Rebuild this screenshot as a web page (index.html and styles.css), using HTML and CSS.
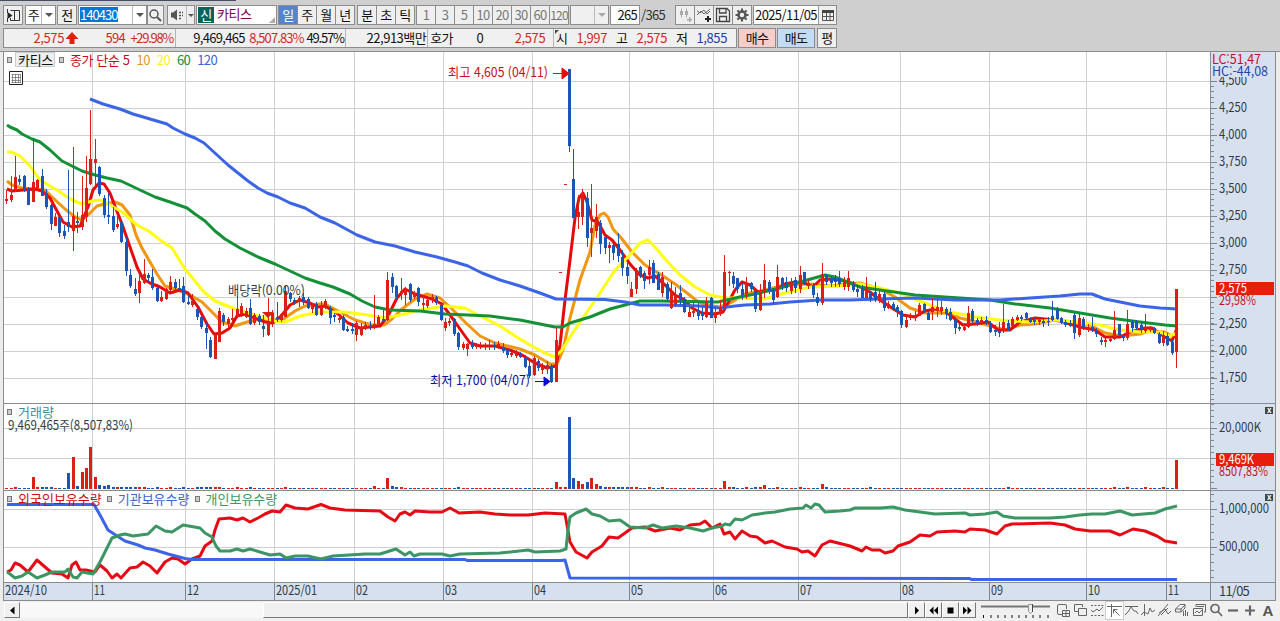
FILE: index.html
```html
<!DOCTYPE html>
<html lang="ko">
<head>
    <meta charset="UTF-8">
    <title>카티스 일봉 차트</title>
    <link rel="stylesheet" href="styles.css">
</head>
<body>
    <div class="topline"></div>

    <div class="toolbar">
        <div class="group"><button class="btn w18"><svg width="15" height="15" viewBox="0 0 15 15"><path d="M4.500 2.500H13.500V12.500H4.500M8.500 2V12M1.500 1V5M1.500 10V14M4.500 12.500V10" fill="none" stroke="#333"/><path d="M1.500 4L6.500 7.500L1.500 11Z" fill="#222"/></svg></button></div>
        <div class="group select gap2"><span class="cell w15">주</span><span class="drop"></span></div>
        <div class="group gap1"><button class="btn w18">전</button></div>
        <div class="group select gap1"><span class="cell code"><b>140430</b></span><span class="drop"></span></div>
        <div class="group"><button class="btn w15"><svg width="15" height="15" viewBox="0 0 15 15"><circle cx="6" cy="6" r="4" fill="none" stroke="#555" stroke-width="1.500"/><path d="M9 9L13 13" stroke="#555" stroke-width="2"/></svg></button></div>
        <div class="group gap3"><button class="btn w18"><svg width="16" height="14" viewBox="0 0 16 14"><path d="M2 4.500H4L8 1.500V12.500L4 9.500H2Z" fill="#555"/><path d="M10 4.500h2M10 7.500h2M10 10.500h2M13 4.500h1M13 7.500h1" stroke="#555" stroke-width="1.500"/></svg></button><span class="drop raised"></span></div>
        <div class="group select name gap1"><span class="tag">신</span><span class="stock">카티스</span><i class="corner"></i></div>
        <div class="group gap1"><button class="btn w18 active">일</button><button class="btn w18">주</button><button class="btn w18">월</button><button class="btn w18">년</button></div>
        <div class="group gap2"><button class="btn w18">분</button><button class="btn w18">초</button><button class="btn w18">틱</button></div>
        <div class="group gap1 minutes"><button class="btn w18">1</button><button class="btn w18">3</button><button class="btn w18">5</button><button class="btn w18">10</button><button class="btn w18">20</button><button class="btn w18">30</button><button class="btn w18">60</button><button class="btn w18 tight">120</button></div>
        <div class="group gap1 disabled"><span class="cell w23"></span><span class="drop"></span></div>
        <div class="group select count gap1">265</div>
        <span class="total">/365</span>
        <div class="group tools">
            <button class="btn w18"><svg width="17" height="17" viewBox="0 0 17 17"><path d="M4.500 1.500v9M9.500 1.500v9" stroke="#aaa"/><path d="M3 4h3v4H3zM8 4h3v4H8zM10 12h5v1.500h-5zM12 10h1.500v5h-1.500z" fill="#aaa"/></svg></button>
            <button class="btn w18"><svg width="17" height="17" viewBox="0 0 17 17"><path d="M1 8L5 4L8 7L14 2M1 4L4 6L8 3L11 7L14 4" fill="none" stroke="#666"/><path d="M9 12h6M12 9v6" stroke="#222" stroke-width="2"/></svg></button>
            <button class="btn w18"><svg width="16" height="16" viewBox="0 0 16 16"><path d="M1.500 1.500H12L14.500 4V14.500H1.500ZM4.500 1.500V6H11V1.500M4.500 14V9.500H11.500V14" fill="none" stroke="#444" stroke-width="1.300"/></svg></button>
            <button class="btn w18"><svg width="16" height="16" viewBox="0 0 16 16"><circle cx="8" cy="8" r="3.500" fill="none" stroke="#555" stroke-width="2.500"/><path d="M8 1.500V4M8 12V14.500M1.500 8H4M12 8H14.500M3.400 3.400L5 5M11 11L12.600 12.600M12.600 3.400L11 5M5 11L3.400 12.600" stroke="#555" stroke-width="2"/></svg></button>
        </div>
        <div class="group select date gap1"><span class="cell">2025/11/05</span><button class="btn w18"><svg width="14" height="13" viewBox="0 0 14 13"><path d="M1.500 1.500H12.500V11.500H1.500ZM5.500 3V11M9 3V11M1 7.500H12" fill="none" stroke="#555"/><path d="M1 1H13V4H1Z" fill="#444"/></svg></button></div>
    </div>

    <div class="quotebar">
        <div class="quotes">
            <div class="quote q1 up"><span>2,575</span><svg width="14" height="14" viewBox="0 0 14 14"><path d="M7 1L13.500 8H9.500V13H4.500V8H0.500Z" fill="#e2200e"/></svg><span>594</span><span>+29.98%</span></div>
            <div class="quote q2"><span>9,469,465</span><span class="up">8,507.83%</span><span>49.57%</span></div>
            <div class="quote q3"><span>22,913백만</span></div>
            <div class="quote q4"><em>호가</em><span>0</span><span class="up">2,575</span></div>
            <div class="quote q5"><i class="notch"></i><em>시</em><span class="up">1,997</span><em>고</em><span class="up">2,575</span><em>저</em><span class="down">1,855</span></div>
        </div>
        <button class="order buy">매수</button>
        <button class="order sell">매도</button>
        <button class="order avg">평</button>
    </div>

    <div class="chart">
        <div class="panel price">
            <svg id="price" width="1207" height="351" viewBox="4 52 1207 351"></svg>
            <div class="legend"><i></i><span class="chip">카티스</span><i></i><span class="ma5">종가 단순 5</span><span class="ma10">10</span><span class="ma20">20</span><span class="ma60">60</span><span class="ma120">120</span></div>
            <svg class="gridicon" width="14" height="14" viewBox="0 0 14 14"><path d="M.5.5h13v13H.5z" fill="#fff" stroke="#222"/><path d="M2.500 3.500h9M2.500 6.500h9M2.500 9.500h9M2.500 11.500h9M3.500 3v9M6.500 3v9M9.500 3v9M11.500 3v9" stroke="#666" stroke-width=".7"/></svg>
        </div>
        <div class="axis"><svg id="priceAxis" width="65" height="351" viewBox="1211 52 65 351"></svg></div>

        <div class="panel">
            <svg id="volume" width="1207" height="86" viewBox="4 404 1207 86"></svg>
            <div class="legend"><i></i><span class="vol">거래량</span></div>
        </div>
        <div class="axis"><svg id="volumeAxis" width="65" height="86" viewBox="1211 404 65 86"></svg><b class="close">x</b></div>

        <div class="panel">
            <svg id="holding" width="1207" height="91" viewBox="4 491 1207 91"></svg>
            <div class="legend"><i></i><span class="foreign">외국인보유수량</span><i></i><span class="inst">기관보유수량</span><i></i><span class="retail">개인보유수량</span></div>
        </div>
        <div class="axis"><svg id="holdingAxis" width="65" height="91" viewBox="1211 491 65 91"></svg><b class="close">x</b></div>

        <div class="dates"><svg id="dates" width="1207" height="17" viewBox="4 583 1207 17"></svg></div>
        <div class="axis last">11/05</div>
    </div>

    <div class="bottombar">
        <button class="scroll"><svg width="9" height="9" viewBox="0 0 9 9"><path d="M6.500 0.500V8.500L2 4.500Z"/></svg></button>
        <div class="track"><div class="thumb"></div></div>
        <button class="scroll"><svg width="9" height="9" viewBox="0 0 9 9"><path d="M3 0.500V8.500L7 4.500Z"/></svg></button>
        <button class="scroll"><svg width="9" height="9" viewBox="0 0 9 9"><path d="M4.500 .5V8.500L.5 4.500ZM9 .5V8.500L5 4.500Z"/></svg></button>
        <button class="scroll"><svg width="9" height="9" viewBox="0 0 9 9"><path d="M1.500 1.500h6v6h-6z"/></svg></button>
        <button class="scroll"><svg width="9" height="9" viewBox="0 0 9 9"><path d="M0 .5V8.500L4 4.500ZM4.500 .5V8.500L8.500 4.500Z"/></svg></button>
        <svg class="zoomer" width="71" height="17" viewBox="0 0 71 17"><path d="M1 4.500H70" stroke="#777" stroke-width="2"/><path d="M3.500 13v3M11 13v3M18 13v3M25 13v3M32 13v3M39 13v3M46 13v3M53 13v3M60 13v3M68 13v3" stroke="#111"/><path d="M49 2.500h3.500v7l-2 2-2-2v-7z" fill="#eee" stroke="#999"/><path d="M52.500 2v8" stroke="#444"/></svg>
        <div class="icons">
            <svg viewBox="0 0 17 17"><path d="M7 12.500H4q-1.500 0-1.500-1.500V4Q2.500 2.500 4 2.500H10q1.500 0 1.500 1.500V7M7.500 8.500h7v6h-7zM11 8v6M7.500 11.500h7"/></svg>
            <svg viewBox="0 0 17 17"><path d="M6 9.500H2.500V2.500H10.500V5M6.500 6.500h8v7h-8z"/></svg>
            <svg viewBox="0 0 17 17"><path d="M2 8l2 2 4-3 2 2 4-4"/><path d="M2 3.500H15M2 13.500H15" stroke-dasharray="2 1.500"/></svg>
            <svg class="pressed" viewBox="0 0 17 17"><path d="M5.500 2V15M1 4.500H16M7.500 7.500l6 6M7.500 7.500v4M7.500 7.500h4"/></svg>
            <svg viewBox="0 0 17 17"><path d="M2 4.500H15M2 13L5 10L8 5L11 9H13L15 12"/></svg>
            <svg viewBox="0 0 17 17"><path d="M4.500 2V14M1 13L4 10L8 12L10 6L12 10L15 8"/></svg>
            <svg viewBox="0 0 17 17"><path d="M1 14L11 2M2 11L8 7L11 12L14 9M4 13L11 6"/></svg>
            <svg viewBox="0 0 17 17"><path d="M1.500 7L6 2.500H11V6L7 10H1.500ZM2 7H7V10M7 7L11 3M9.500 9v5M11.500 8v6M13.500 10v4"/></svg>
            <svg viewBox="0 0 17 17"><path d="M5 5V2.500H14.500V10H13M2.500 6.500h9v7h-9zM4 11l2-2 2 2 3-3M6 4.500h7"/></svg>
            <svg class="bold" viewBox="0 0 17 17"><circle cx="7" cy="6.500" r="4"/><path d="M10 9.500L14 14"/></svg>
            <svg class="heavy" viewBox="0 0 17 17"><path d="M3 8.500H13"/></svg>
            <svg class="heavy" viewBox="0 0 17 17"><path d="M3 8.500H13M8 3.500V13.500"/></svg>
            <b>A</b>
        </div>
    </div>

    <script src="chart.js"></script>
</body>
</html>
```
FILE: styles.css
```css
* {
    box-sizing: border-box;
}

body {
    margin: 0;
    width: 1280px;
    height: 621px;
    overflow: hidden;
    background: #cfcfcf;
    font-family: "Noto Sans CJK KR", "Liberation Sans", sans-serif;
    font-size: 13px;
    letter-spacing: -0.7px;
    line-height: 18px;
    color: #111;
}

button {
    font: inherit;
    letter-spacing: inherit;
    color: inherit;
    padding: 0;
    margin: 0;
}

svg {
    display: block;
    flex: none;
}

.topline {
    width: 236px;
    height: 1px;
    background: #474b63;
}

/* first toolbar row */
.toolbar {
    display: flex;
    margin: 4px 0 0 3px;
    height: 20px;
}

.group {
    display: flex;
    flex: none;
    height: 20px;
    border: 1px solid #8c8c8c;
    background: #f0f0f0;
}

.group.select {
    background: #fff;
}

.gap1 { margin-left: 1px; }
.gap2 { margin-left: 2px; }
.gap3 { margin-left: 3px; }

.btn {
    display: flex;
    align-items: center;
    justify-content: center;
    height: 18px;
    border: 0;
    background: #efefef;
    white-space: nowrap;
}

.btn + .btn {
    border-left: 1px solid #8c8c8c;
    width: 19px;
}

.btn.active {
    background: #5485cc;
    color: #fff;
}

.w15 { width: 15px; }
.w18 { width: 18px; }
.w23 { width: 23px; }

.cell {
    text-align: center;
}

.code {
    width: 53px;
    text-align: left;
    padding: 1px 0 0 1px;
}

.code b {
    display: block;
    width: 38px;
    height: 15px;
    line-height: 15px;
    font-weight: normal;
    letter-spacing: -0.95px;
    background: #0078d7;
    color: #fff;
}

.drop {
    display: flex;
    align-items: center;
    justify-content: center;
    width: 14px;
    border-left: 1px solid #bbb;
}

.drop::after {
    content: "";
    border: 4px solid transparent;
    border-top-color: #555;
    border-bottom: 0;
}

.drop.raised {
    width: 8px;
    background: #efefef;
}

.drop.raised::after {
    border-width: 3px 3px 0;
}

.name {
    width: 81px;
    position: relative;
    padding: 1px;
}

.tag {
    width: 16px;
    height: 16px;
    line-height: 15px;
    background: #06645c;
    color: #fff;
    text-align: center;
}

.stock {
    margin-left: 3px;
    line-height: 14px;
    letter-spacing: -0.4px;
    color: #80004e;
}

.corner {
    position: absolute;
    right: 1px;
    bottom: 1px;
    border: 3.5px solid transparent;
    border-right-color: #aaa;
    border-bottom-color: #aaa;
}

.minutes {
    color: #777;
}

.tight {
    font-size: 12px;
    letter-spacing: -0.9px;
}

.disabled .drop::after {
    border-top-color: #aaa;
}

.count {
    width: 30px;
    justify-content: flex-end;
    padding-right: 2px;
}

.total {
    width: 35px;
    padding: 1px 0 0 1px;
    color: #333;
    letter-spacing: -0.7px;
}

.date .cell {
    width: 64px;
    letter-spacing: -0.6px;
}

.date .btn {
    border-left: 1px solid #999;
}

/* second row with quotes */
.quotebar {
    display: flex;
    margin: 3px 0 0 3px;
    height: 20px;
}

.quotes {
    display: flex;
    width: 734px;
    border: 1px solid #8c8c8c;
    background: #f0f0f0;
}

.quote {
    display: flex;
    align-items: center;
    border-right: 1px solid #b5b5b5;
    white-space: nowrap;
}

.quote span {
    text-align: right;
    flex: none;
}

.quote em {
    font-style: normal;
    flex: none;
}

.up { color: #d2281e; }
.down { color: #2040a8; }

.q1 { width: 172px; }
.q1 span:first-child { width: 60px; letter-spacing: -0.4px; }
.q1 svg { margin-left: 1px; }
.q1 span:nth-of-type(2) { width: 46px; }
.q1 span:last-child { width: 48px; letter-spacing: -1.3px; }
.q2 { width: 171px; }
.q2 span:first-child { width: 69px; }
.q2 span:nth-child(2) { width: 59px; letter-spacing: -0.9px; }
.q2 span:last-child { width: 40px; letter-spacing: -1.2px; }
.q3 { width: 82px; justify-content: flex-end; padding-right: 1px; }
.q3 span { letter-spacing: -0.5px; }
.q4 { width: 126px; padding-left: 2px; }
.q4 em { width: 24px; }
.q4 span { width: 29px; letter-spacing: -0.4px; }
.q4 span:last-child { width: 62px; }
.q5 { position: relative; border: 0; padding-left: 2px; }
.q5 em { width: 12px; }
.q5 span { width: 39px; margin-right: 9px; letter-spacing: -0.4px; }

.notch {
    position: absolute;
    left: 1px;
    top: 1px;
    border: 2.5px solid #444;
    border-right-color: transparent;
    border-bottom-color: transparent;
}

.order {
    width: 38px;
    margin-left: 1px;
    border: 1px solid #8c8c8c;
    background: #efefef;
}

.buy { background: #f6cdc9; }
.sell { background: #c3dcf6; }
.order.avg { width: 20px; margin-left: 2px; }

/* chart area */
.chart {
    display: grid;
    grid-template-columns: 1207px 66px;
    grid-template-rows: 352px 87px 92px 18px;
    margin-top: 3px;
    width: 1280px;
    padding-left: 3px;
    border-top: 1px solid #8c8c8c;
    background: #ececec;
}

.panel,
.dates {
    position: relative;
    width: 1208px;
    background: #fff;
    border-left: 1px solid #8c8c8c;
    border-bottom: 1px solid #8c8c8c;
}

.axis {
    position: relative;
    margin-left: 1px;
    background: #d6e0ef;
    border-right: 1px solid #8c8c8c;
    border-bottom: 1px solid #8c8c8c;
}

.dates {
    background: #d6e0ef;
}

.last {
    padding-left: 8px;
    line-height: 15px;
    color: #333c46;
    letter-spacing: -0.8px;
}

.legend {
    position: absolute;
    left: 3px;
    top: -1px;
    display: flex;
    align-items: center;
    height: 17px;
    white-space: nowrap;
    letter-spacing: 0;
}

.legend i {
    width: 5px;
    height: 6px;
    border: 1px solid #777;
    background: #ccc;
}

.legend span {
    margin: 0 5px 0 6px;
}

.price .legend span {
    margin: 0 0 0 7px;
    letter-spacing: -0.6px;
}

.price .legend .chip {
    height: 15px;
    line-height: 13px;
    margin: 0 4px 0 3px;
    padding: 0 1px 0 2px;
    letter-spacing: -0.3px;
    background: #eee;
    border: 1px solid #ccc;
}

.price .legend .ma5 { margin-left: 6px; letter-spacing: -0.4px; }
.ma5 { color: #c80a14; }
.ma10 { color: #e69628; }
.ma20 { color: #fff01e; }
.ma60 { color: #148c3c; }
.ma120 { color: #3c64d2; }
.vol { color: #3c8c96; }
.foreign { color: #c80a14; }
.inst { color: #3c64d2; }
.retail { color: #3c9664; }

.gridicon {
    position: absolute;
    left: 5px;
    top: 19px;
}

.close {
    position: absolute;
    right: 2px;
    top: 3px;
    width: 8px;
    height: 7px;
    background: #3c4650;
    color: #fff;
    font-size: 8px;
    line-height: 6px;
    text-align: center;
}

svg text {
    font-size: 13px;
    letter-spacing: 0;
    fill: #333c46;
}

.grid {
    stroke: #d0d0d0;
    shape-rendering: crispEdges;
}

.line {
    fill: none;
    stroke-width: 3;
    stroke-linejoin: round;
}

.tick {
    stroke: #7d858e;
    shape-rendering: crispEdges;
}

/* scroll bar and drawing tools */
.bottombar {
    display: flex;
    height: 20px;
    padding: 1px 0 2px 4px;
    background: #f0f0f0;
}

.scroll {
    display: flex;
    align-items: center;
    justify-content: center;
    flex: none;
    width: 17px;
    height: 16px;
    background: #f0f0f0;
    border: 1px solid #fff;
    border-right-color: #777;
    border-bottom-color: #777;
}

.scroll:first-child {
    width: 16px;
}

.track {
    display: flex;
    justify-content: flex-end;
    flex: none;
    width: 888px;
    height: 16px;
    background: #f8f8f8;
}

.thumb {
    width: 645px;
    background: #f0f0f0;
    border: 1px solid #fff;
    border-right-color: #777;
    border-bottom-color: #777;
}

.zoomer {
    margin-left: 4px;
}

.icons {
    display: flex;
    margin-left: 4px;
    color: #555;
}

.icons svg {
    width: 17px;
    height: 17px;
    fill: none;
    stroke: #666;
}

.icons .pressed {
    background: #fff;
    outline: 1px solid #ccc;
}

.icons .bold { stroke-width: 1.7; }
.icons .heavy { stroke-width: 2.2; }

.icons b {
    width: 17px;
    font: bold 15px/17px "Liberation Sans", sans-serif;
    text-align: center;
}
```
FILE: chart.js
```js
const NS = 'http://www.w3.org/2000/svg';
const RED = '#dc1e14';
const BLUE = '#1a56b8';

function draw(parent, tag, attrs, text) {
    const el = document.createElementNS(NS, tag);
    for (const key in attrs) el.setAttribute(key, attrs[key]);
    if (text) el.textContent = text;
    parent.appendChild(el);
    return el;
}

function label(parent, x, y, text, width, color) {
    const attrs = { x: x, y: y, textLength: width, lengthAdjust: 'spacingAndGlyphs' };
    if (color) attrs.style = 'fill:' + color;
    draw(parent, 'text', attrs, text);
}

function line(parent, color, points) {
    draw(parent, 'polyline', { class: 'line', stroke: color, points: points });
}

const price = document.getElementById('price');
const volume = document.getElementById('volume');
const holding = document.getElementById('holding');
const dates = document.getElementById('dates');
const priceAxis = document.getElementById('priceAxis');
const volumeAxis = document.getElementById('volumeAxis');
const holdingAxis = document.getElementById('holdingAxis');

// high, body top, body bottom, low; r = up day, b = down day
const candles = `190 199 201 204 r|176 195 200 202 r|156 177 190 192 r|175 179 182 185 b|175 176 191 192 b|187 190 205 205 b|138 182 202 202 r|179 180 188 189 r|169 176 196 196 b|189 193 207 209 b
204 205 224 230 b|213 217 226 226 r|216 217 233 237 b|225 231 236 239 b|170 222 227 232 b|147 216 231 251 r|212 221 223 233 b|176 215 227 230 r|156 188 217 222 r|110 159 184 185 r
139 159 163 185 r|166 167 194 196 b|195 198 215 218 b|193 215 217 224 b|207 216 230 232 b|215 224 227 229 r|221 222 242 243 b|237 242 271 276 b|269 275 286 288 b|278 289 294 296 b
273 281 293 303 r|259 274 283 284 r|273 275 278 282 b|269 277 288 290 b|284 288 301 302 b|291 297 301 302 r|288 289 299 300 r|276 282 290 292 r|279 282 288 292 b|279 288 289 290 b
277 286 302 303 b|295 302 304 305 b|294 301 305 307 r|305 309 317 320 b|312 317 327 329 b|323 328 333 349 b|337 340 357 358 b|334 335 359 359 r|308 311 342 342 r|313 315 322 326 b
317 319 324 327 r|309 318 320 323 r|296 309 316 318 r|303 306 315 317 r|308 311 317 318 r|299 308 324 325 b|313 315 323 325 r|314 316 322 325 b|315 326 329 337 b|298 322 335 336 r
310 313 323 327 r|302 317 319 322 b|313 314 320 322 r|285 291 317 317 r|292 293 299 302 b|298 300 302 305 b|296 298 301 307 r|293 297 302 305 b|297 299 308 309 b|303 305 309 313 r
302 304 315 316 b|301 307 315 316 r|299 301 308 309 r|306 308 318 324 b|313 315 317 322 b|316 318 320 323 r|315 317 330 331 b|326 329 331 332 b|323 329 331 334 b|321 323 335 341 r
323 327 335 336 r|322 325 328 330 r|321 326 328 330 b|295 324 328 329 r|315 317 325 326 r|310 319 321 324 b|272 280 320 321 r|273 277 287 293 b|285 286 297 299 b|278 291 294 300 r
287 289 295 305 r|283 284 300 302 b|291 293 297 299 r|287 288 302 306 b|295 303 305 310 r|297 300 306 308 r|294 297 300 303 r|296 297 303 305 b|302 305 320 321 b|318 322 328 331 r
318 321 323 326 r|318 319 334 336 b|332 333 347 350 b|342 344 348 350 r|343 344 349 356 r|340 343 347 349 b|343 345 347 349 r|342 345 346 349 r|343 345 347 350 r|340 345 346 350 r
342 345 347 350 b|341 344 347 349 r|343 347 351 353 b|348 350 355 358 b|352 353 355 357 r|350 352 356 358 r|352 353 357 358 b|355 357 367 368 b|359 366 376 378 b|356 358 375 376 r
359 361 368 371 b|363 366 370 374 r|361 365 369 374 r|364 366 382 383 b|328 340 382 382 r|272 272 273 273 r|184 184 185 185 r|69 69 146 152 b|149 179 218 218 b|195 212 217 229 r
189 193 217 225 r|192 198 238 247 b|184 228 233 257 r|204 217 231 238 r|220 223 244 254 b|235 237 248 254 b|242 245 248 263 r|242 245 253 260 b|233 244 256 262 b|250 257 268 276 b
263 267 276 284 b|282 289 297 297 r|268 270 289 294 r|266 267 275 278 b|271 273 281 289 b|260 267 275 284 r|260 263 283 283 b|272 274 290 290 b|272 277 293 297 r|282 284 299 302 b
282 292 308 309 r|287 295 304 307 r|285 293 300 305 b|297 300 312 313 b|307 312 317 317 r|303 311 313 317 r|303 310 316 320 b|307 313 316 320 b|297 302 317 318 r|297 298 318 318 b
307 312 318 323 r|300 308 313 316 r|255 272 308 308 r|271 272 273 286 r|272 276 284 288 b|278 278 289 293 b|283 289 295 300 b|277 283 294 299 r|282 283 289 292 b|290 291 309 312 b
284 292 310 311 r|264 280 293 298 r|280 282 291 294 b|288 290 300 304 b|265 277 297 298 r|277 278 286 290 b|277 282 288 292 b|278 284 291 294 r|277 280 288 293 b|266 275 289 293 r
272 272 283 285 b|279 283 286 289 r|283 285 295 298 b|293 297 303 306 b|263 274 303 305 r|274 275 282 285 b|276 278 283 287 b|275 278 282 287 b|271 278 284 287 b|277 280 287 290 r
271 278 287 291 r|281 284 290 292 b|285 289 292 297 b|285 288 298 298 b|277 287 298 298 r|291 293 299 302 b|282 292 300 302 b|291 294 301 303 r|292 294 308 311 b|301 304 308 309 r
302 304 309 311 b|305 307 312 317 b|310 311 325 328 b|317 320 327 328 r|313 316 318 320 r|311 315 318 321 r|303 305 316 316 r|303 304 312 313 b|311 313 320 320 b|298 307 312 320 r
299 307 311 317 r|301 307 311 315 r|307 309 314 319 b|308 312 320 321 b|317 319 328 334 b|322 327 329 331 b|323 327 330 331 r|306 313 327 328 r|309 311 321 323 b|318 320 324 326 b
317 320 323 325 r|316 320 322 325 b|321 324 332 333 b|325 330 332 336 b|322 331 333 337 b|304 322 331 333 r|320 323 330 331 b|317 319 326 327 r|315 317 320 321 r|315 317 319 321 b
312 313 318 319 b|317 319 322 323 b|318 320 322 325 b|318 320 322 325 r|318 321 323 327 b|317 321 322 326 b|301 316 320 321 b|307 309 319 320 b|317 318 323 324 b|320 322 325 327 b
320 324 326 327 b|313 315 333 339 b|313 318 335 337 r|317 319 327 330 b|324 327 330 332 r|317 327 330 332 b|328 330 334 337 b|337 340 342 345 b|338 340 342 347 r|336 339 341 342 r
311 330 339 340 r|324 324 335 336 b|334 336 338 341 b|310 324 338 340 r|320 322 328 332 b|320 322 328 330 b|321 325 329 333 b|314 327 331 333 r|326 327 330 332 r|327 328 333 334 b
332 334 343 344 b|331 335 343 346 r|333 336 345 346 b|340 342 353 355 b|289 289 352 368 r`.split(/[|\n]/).map(row => row.split(' '));

// tops of the volume bars that rise above the base line
const peaks = {
    2: 487, 6: 477, 7: 487, 8: 487, 9: 487, 10: 487, 14: 473, 15: 457, 16: 486, 17: 472, 18: 468, 19: 447, 20: 477, 21: 485,
    22: 486, 23: 485, 24: 487, 25: 487, 26: 487, 27: 487, 28: 487, 29: 487, 30: 487, 31: 487, 34: 487, 37: 487,
    40: 487, 43: 487, 44: 487, 45: 487, 46: 487, 47: 487, 48: 487, 52: 487, 55: 487, 63: 487, 83: 486, 86: 478,
    87: 486, 88: 487, 89: 487, 102: 487, 124: 482, 125: 487, 126: 487, 127: 417, 128: 478, 129: 481, 130: 484,
    131: 482, 132: 478, 133: 484, 134: 486, 135: 487, 136: 487, 137: 487, 138: 487, 139: 487, 140: 487, 141: 487,
    142: 487, 145: 487, 148: 487, 162: 481, 163: 487, 164: 487, 167: 487, 169: 487, 170: 487, 171: 485, 174: 487,
    179: 487, 184: 484, 185: 487, 195: 487, 226: 487, 250: 487, 253: 487, 257: 487, 261: 487, 264: 460
};

const months = [[4, '2024/10', 42], [92, '11', 11], [185, '12', 12], [274, '2025/01', 41], [354, '02', 12], [443, '03', 12],
    [532, '04', 12], [629, '05', 12], [713, '06', 12], [798, '07', 12], [900, '08', 12], [989, '09', 12], [1086, '10', 12], [1166, '11', 11]];

// grid
function grid(svg, top, bottom, rows) {
    rows.forEach(y => draw(svg, 'path', { class: 'grid', d: `M4 ${y}.5H1211` }));
    months.slice(1).forEach(m => draw(svg, 'path', { class: 'grid', d: `M${m[0]}.5 ${top}V${bottom}` }));
    draw(svg, 'path', { class: 'grid', d: `M1210.5 ${top}V${bottom}`, style: 'stroke:#8c8c8c' });
}
grid(price, 52, 403, [81, 108, 135, 162, 189, 216, 243, 270, 297, 324, 351, 378]);
grid(volume, 404, 490, [428, 458]);
grid(holding, 491, 582, [509, 547]);

// moving averages
line(price, '#f0960f', '7,181 12,185 22,188 45,190 52,197 65,209 75,217 82,220 90,213 97,206 105,204 115,202 122,205 130,215 136,235 142,248 150,262 157,274 165,286 178,290 190,295 202,302 212,312 222,322 235,326 247,322 260,319 270,320 282,320 295,311 305,306 318,304 325,304 340,312 355,320 372,325 384,325 392,319 402,309 415,299 427,294 440,298 452,309 467,324 480,336 495,343 520,349 535,355 550,364 557,364 563,350 570,318 580,280 590,252 595,225 600,215 604,213 608,217 613,229 622,239 632,252 645,265 660,274 675,284 687,293 697,301 707,305 720,307 732,302 745,294 765,290 785,285 810,284 830,286 850,284 860,283 880,289 895,297 910,308 925,313 945,313 960,318 980,323 1005,330 1020,325 1035,324 1055,320 1075,322 1090,325 1105,333 1122,336 1140,334 1150,331 1165,332 1172,336 1177,334');
line(price, '#e60a0a', '7,189 12,191 35,189 42,191 50,198 57,211 63,222 72,227 80,226 88,207 93,190 99,183 104,184 110,193 116,209 122,224 130,247 137,267 143,279 150,283 160,287 170,293 180,290 188,293 198,307 207,324 214,334 222,333 230,328 237,316 245,314 255,318 265,322 273,323 282,315 290,305 300,300 310,303 318,307 325,306 338,314 348,323 360,328 380,326 388,316 397,298 405,289 415,294 432,299 442,304 450,315 460,329 470,343 480,346 495,346 510,350 522,355 535,363 547,368 556,366 560,345 565,300 570,260 575,218 579,198 583,193 587,202 592,220 598,222 605,235 612,240 620,250 630,264 640,275 648,278 655,276 663,283 675,295 685,300 692,308 702,313 715,314 723,312 728,303 735,290 742,282 750,285 758,292 765,291 775,290 785,284 795,282 805,283 813,287 820,280 830,279 840,280 855,284 870,292 880,300 892,308 903,315 915,317 925,311 935,309 945,311 955,319 963,325 975,324 988,322 998,330 1010,330 1020,322 1035,318 1045,319 1060,321 1080,327 1095,330 1105,337 1120,337 1130,332 1145,328 1152,328 1160,334 1172,341 1177,328');
line(price, '#ffff14', '7,152 12,152 20,156 30,166 40,180 50,186 60,192 72,200 82,204 92,201 100,200 110,205 122,212 137,225 150,232 160,240 172,248 185,269 195,281 204,292 215,301 235,309 255,315 275,321 285,322 300,316 320,312 345,312 368,315 385,318 400,315 420,310 445,306 465,308 480,316 500,326 515,336 530,345 545,353 555,357 562,350 572,334 585,315 600,293 615,270 630,255 640,243 648,240 655,247 665,259 680,275 695,287 710,295 725,298 740,298 765,299 785,293 810,287 840,286 860,284 875,287 900,293 925,303 945,311 975,317 1000,320 1030,322 1055,320 1075,322 1100,325 1120,330 1140,332 1160,332 1170,336 1177,333');
line(price, '#149137', '7,125 10,127 17,130 22,134 32,139 40,142 50,150 62,161 70,165 82,171 95,175 107,178 121,181 140,190 155,197 170,202 187,208 195,214 205,221 215,231 225,239 240,248 258,257 275,264 290,271 305,278 320,283 333,287 350,294 362,301 375,307 390,310 420,311 445,314 490,316 520,320 555,327 563,327 570,323 590,317 610,309 640,301 660,301 718,302 735,298 755,294 780,288 800,282 825,275 835,277 850,283 860,287 880,290 915,295 960,298 990,300 1015,304 1050,308 1080,313 1110,318 1140,322 1165,325 1177,326');
line(price, '#3c64e6', '90,99 103,104 120,109 133,114 150,119 167,124 173,128 185,134 195,138 204,143 216,154 228,165 238,173 248,181 258,188 267,193 278,197 290,203 305,208 320,217 335,223 357,235 375,242 395,246 415,252 437,257 455,262 468,266 482,273 500,280 520,286 540,293 556,299 605,299.5 625,302 640,305 665,305 700,306 720,308 735,306 745,305 770,304 790,302 820,300 850,300 880,299 915,298 955,300 1000,300 1030,298 1060,296 1080,294 1092,294 1105,299 1120,302 1140,306 1160,308 1177,309');

// candles and volume bars
candles.forEach((c, i) => {
    const x = Math.floor(6.7 + 4.432 * i);
    const [high, top, bottom, low] = c.map(Number);
    const fill = c[4] === 'r' ? RED : BLUE;
    draw(price, 'rect', { x: x, y: high, width: 1, height: low - high, fill: fill });
    draw(price, 'rect', { x: x - 1, y: top, width: 3, height: bottom - top, fill: fill });
    const y = peaks[i] || 488;
    draw(volume, 'rect', { x: x - 1, y: y, width: 3, height: 489 - y, fill: fill });
});

label(price, 448, 77, '최고 4,605 (04/11)', 100, '#cd0a14');
draw(price, 'path', { d: 'M553 73.500H563M562 68L569 73.500L562 79Z', fill: '#e60a0a', stroke: '#e60a0a' });
label(price, 430, 385, '최저 1,700 (04/07)', 100, '#0a0aaa');
draw(price, 'path', { d: 'M535 381.500H545M544 377L550 381.500L544 386Z', fill: '#0a0adc', stroke: '#0a0adc' });
label(price, 228, 295, '배당락(0.00%)', 77);
draw(price, 'path', { d: 'M262 312H274L268 318Z', fill: RED });
label(volume, 8, 430, '9,469,465주(8,507,83%)', 125);

// holdings
line(holding, '#e60a14', '7,572 11,570 15,563 20,565 28,572 37,560 45,567 52,573 62,574 68,578 72,565 76,562 80,570 86,570 95,572 100,565 107,571 112,578 117,574 121,578 130,568 137,567 143,562 150,566 157,573 165,562 172,558 178,559 185,564 192,559 200,556 205,546 212,541 215,530 219,519 230,518 237,520 243,518 250,522 258,518 265,514 272,511 280,512 286,505 295,508 308,509 321,504.5 330,508 345,510 380,511 388,517 395,521 400,514 405,512 410,515 415,511 430,512 442,512 450,508 459,513 480,512 495,514 510,515 528,515 545,513 565,514 567,525 570,542 576,552 587,558 592,552 602,546 609,537 618,538 632,528 645,527 655,531 670,528 680,530 690,525 700,524 705,521 712,528 720,524 724,534 730,532 735,539 742,531 750,536 757,537 765,543 772,541 785,547 797,549 802,552 808,551 815,556 822,545 830,541 850,546 862,551 866,547 872,550 880,550 885,553 893,551 898,546 910,542 920,535 930,536 937,532 955,531 965,532 970,529 985,530 997,534 1005,526 1012,524 1050,523 1065,525 1075,529 1090,531 1110,531 1120,535 1133,529 1145,531 1157,536 1165,541 1177,543');
line(holding, '#3c64e6', '7,504.5 94,504.5 100,515 108,530 117,536 125,541 138,545 145,548 155,550 168,554 185,558.5 192,559.5 465,559.5 467,560.5 562,560.5 565,560 570,578 970,578.5 971,579.5 1177,579.5');
line(holding, '#3c9664', '7,572 10,574 15,578 22,576 28,572 37,578 45,575 52,572 65,572 68,569 73,577 77,578 82,572 93,574 100,562 107,548 112,538 120,535 125,534 133,536 148,534 156,526 165,531 172,532 183,525 200,528 205,533 212,537 216,546 220,551 230,551 237,549 243,551 250,549 260,552 270,555 280,554 286,558 295,556 308,556 312,557 321,559 333,556 365,554 380,554 396,549 405,555 410,552 414,556 420,554 442,554 450,556 460,554 500,553 528,550 535,552 560,551 566,549 568,530 570,517 576,513 586,509 592,514 600,516 609,521 620,520 630,527 645,528 653,525 662,528 676,526 690,528 703,531 712,528 722,526 725,524 730,525 735,519 742,520 752,515 765,513 775,512 790,509 803,508 806,505 811,508 815,504 819,505 825,512 840,511 850,510 855,508 865,508 880,508 893,507 905,510 920,512 935,514 965,513 970,515 985,514 997,512 1003,516 1015,518 1050,518 1065,517 1080,515 1092,514 1105,514 1120,511 1132,515 1155,513 1165,509 1177,506');

// axes
function ticks(svg, start, end, step, majors) {
    for (let y = start; y < end; y += step) draw(svg, 'path', { class: 'tick', d: `M1211 ${Math.floor(y)}.5h3` });
    majors.forEach(y => draw(svg, 'path', { class: 'tick', d: `M1211 ${y}.5h6` }));
}
const levels = ['4,500', '4,250', '4,000', '3,750', '3,500', '3,250', '3,000', '2,750', '', '2,250', '2,000', '1,750'];
ticks(priceAxis, 81, 400, 5.4, levels.map((t, i) => 81 + 27 * i));
levels.forEach((t, i) => t && label(priceAxis, 1219, 85 + 27 * i, t, 28));
draw(priceAxis, 'rect', { x: 1211, y: 53, width: 64, height: 24, fill: '#d6e0ef' });
label(priceAxis, 1212, 64, 'LC:51,47', 49, '#c80f1e');
label(priceAxis, 1212, 76, 'HC:-44,08', 56, '#1e46b4');
draw(priceAxis, 'rect', { x: 1216, y: 282, width: 58, height: 13, fill: '#e61e0a' });
label(priceAxis, 1219, 293, '2,575', 28, '#fff');
label(priceAxis, 1219, 305, '29,98%', 37, '#c80f1e');

ticks(volumeAxis, 404, 490, 6, [428, 458, 488]);
label(volumeAxis, 1219, 432, '20,000K', 42);
draw(volumeAxis, 'rect', { x: 1216, y: 453, width: 58, height: 13, fill: '#e61e0a' });
label(volumeAxis, 1219, 464, '9,469K', 35, '#fff');
label(volumeAxis, 1219, 476, '8507,83%', 49, '#c80f1e');

ticks(holdingAxis, 494, 582, 7.6, [509, 547]);
label(holdingAxis, 1219, 513, '1,000,000', 50);
label(holdingAxis, 1219, 551, '500,000', 40);

months.forEach((m, i) => {
    if (i) draw(dates, 'path', { class: 'tick', d: `M${m[0]}.5 583v17` });
    label(dates, m[0] + (i ? 2 : 1), 595, m[1], m[2]);
});
draw(dates, 'path', { class: 'tick', d: 'M1210.5 583v17' });
```
